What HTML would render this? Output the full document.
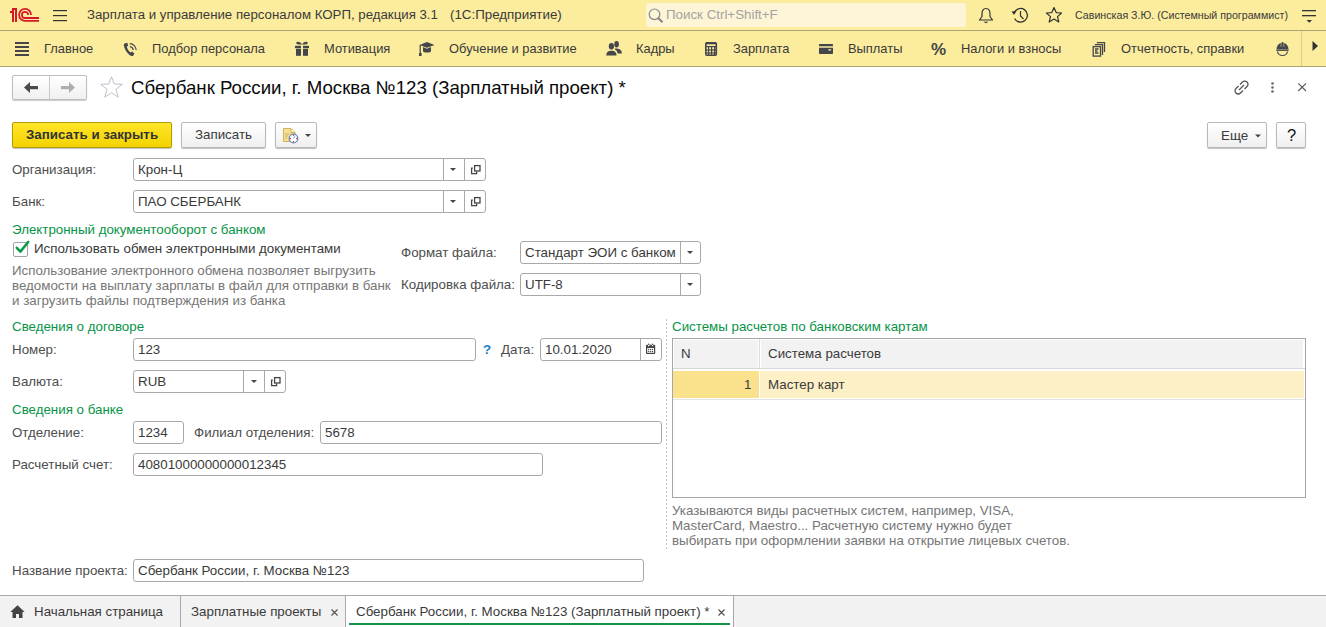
<!DOCTYPE html>
<html><head><meta charset="utf-8">
<style>
*{margin:0;padding:0;box-sizing:border-box}
html,body{width:1326px;height:627px;overflow:hidden;background:#fff}
body{position:relative;font-family:"Liberation Sans",sans-serif;font-size:13.33px;color:#3A3A3A}
.a{position:absolute}
.t{position:absolute;white-space:nowrap;line-height:15px;font-size:13.33px}
.bar{position:absolute;left:0;width:1326px;background:#FBEC9E}
.fld{position:absolute;border:1px solid #A9A9A9;border-radius:3px;background:#fff}
.btn{position:absolute;border:1px solid #B9B9B9;border-radius:2px;background:linear-gradient(#fff,#EFEFEF);box-shadow:0 1px 1px rgba(0,0,0,.25)}
.vd{position:absolute;top:0;bottom:0;width:1px;background:#A9A9A9}
.lbl{color:#4D4D4D}
.grn{color:#089447}
.gry{color:#767676}
svg{position:absolute;overflow:visible}
</style></head><body>

<!-- top bar -->
<div class="bar" style="top:0;height:30px"></div>
<div class="a" style="left:0;top:30px;width:1326px;height:1px;background:#ADA474"></div>
<div class="bar" style="top:31px;height:35px"></div>
<div class="a" style="left:0;top:66px;width:1326px;height:1px;background:#ADA474"></div>

<svg style="left:0;top:0" width="45" height="30" viewBox="0 0 45 30">
 <g fill="none" stroke="#D6192A" stroke-width="1.8">
  <path d="M31.05,14.95 A6,6 0 1 0 25.05,20.95 H39"/>
  <path d="M28.1,14.9 A3.1,3.1 0 1 0 25,18 H39"/>
 </g>
 <g fill="#D6192A"><rect x="12" y="8" width="5" height="2"/><rect x="12" y="8" width="2" height="14"/><rect x="15" y="8" width="2" height="14"/><rect x="10" y="11" width="4" height="2"/></g>
</svg>
<svg style="left:53px;top:9px" width="15" height="13"><g fill="#333"><rect x="0" y="1" width="14" height="1.2"/><rect x="0" y="6" width="14" height="1.2"/><rect x="0" y="11" width="14" height="1.2"/></g></svg>

<div class="t" style="left:87px;top:7px;font-size:13.25px">Зарплата и управление персоналом КОРП, редакция 3.1</div>
<div class="t" style="left:450px;top:7px">(1С:Предприятие)</div>

<div class="a" style="left:646px;top:3px;width:320px;height:24px;background:#FDF5D5;border-radius:3px"></div>
<svg style="left:648px;top:8px" width="17" height="16"><circle cx="6.5" cy="6.3" r="5.3" fill="none" stroke="#888" stroke-width="1.2"/><path d="M10.3,10.3 L14.5,14.3" stroke="#888" stroke-width="2.2"/></svg>
<div class="t" style="left:666px;top:7px;color:#A3A3A3">Поиск Ctrl+Shift+F</div>

<!-- bell -->
<svg style="left:978px;top:7px" width="16" height="17" viewBox="0 0 16 17"><path d="M8,1.5 C5,1.5 4,4 4,7 L4,9.5 L1.5,13 H14.5 L12,9.5 V7 C12,4 11,1.5 8,1.5 Z" fill="none" stroke="#333" stroke-width="1.2" stroke-linejoin="round"/><path d="M5.5,14.8 H10.5 L8,16.2 Z" fill="#333"/></svg>
<!-- history -->
<svg style="left:1011px;top:7px" width="18" height="17" viewBox="0 0 18 17"><path d="M3.2,6 A6.8,6.8 0 1 1 3.6,11.5" fill="none" stroke="#333" stroke-width="1.3"/><path d="M0.5,4.5 L5.5,4 L3,8 Z" fill="#333"/><path d="M9.5,4 V9 L12.5,12" fill="none" stroke="#333" stroke-width="1.2"/></svg>
<!-- star -->
<svg style="left:1045px;top:6px" width="18" height="18" viewBox="0 0 18 18"><path d="M9,1.5 L11.2,6.6 L16.6,7 L12.5,10.6 L13.8,16 L9,13.1 L4.2,16 L5.5,10.6 L1.4,7 L6.8,6.6 Z" fill="none" stroke="#333" stroke-width="1.2" stroke-linejoin="round"/></svg>
<div class="t" style="left:1075px;top:9px;font-size:10.67px;line-height:13px">Савинская З.Ю. (Системный программист)</div>
<svg style="left:1302px;top:9px" width="15" height="15"><rect x="0" y="1" width="14" height="1.3" fill="#333"/><rect x="0" y="6" width="14" height="1.3" fill="#333"/><path d="M4.6,11 H10 L7.3,13.8 Z" fill="#333"/></svg>

<!-- section bar -->
<svg style="left:15px;top:42px" width="14" height="14"><g fill="#44464C"><rect y="0" width="14" height="2"/><rect y="4" width="14" height="2"/><rect y="8" width="14" height="2"/><rect y="12" width="14" height="2"/></g></svg>
<div class="t" style="left:44px;top:41px;font-size:12.9px">Главное</div>
<svg style="left:123px;top:42px" width="14" height="15" viewBox="0 0 14 15"><path d="M2.3,1.2 L4.2,0.8 L5.2,3.6 L3.8,4.8 C4.3,7 5.8,9.3 7.6,10.6 L9,9.6 L11.3,11.6 L10.4,13.5 C9.5,14.3 8,14.2 6.8,13.2 C3.5,10.5 1.2,6.5 0.8,3.2 C0.7,2.3 1.3,1.6 2.3,1.2 Z" fill="#44464C"/><path d="M6.8,1.6 A6.8,6.8 0 0 1 13.2,8" fill="none" stroke="#44464C" stroke-width="1.2"/><path d="M6.8,4.6 A3.8,3.8 0 0 1 10.2,8" fill="none" stroke="#44464C" stroke-width="1.2"/></svg>
<div class="t" style="left:152px;top:41px;font-size:12.9px">Подбор персонала</div>
<svg style="left:295px;top:41px" width="15" height="15" viewBox="0 0 15 15"><g fill="#44464C"><path d="M7,3.6 C5.5,0.3 1.2,0 1.2,2.3 C1.2,3.4 3.5,3.7 7,3.6 Z"/><path d="M7,3.6 C8.5,0.3 12.8,0 12.8,2.3 C12.8,3.4 10.5,3.7 7,3.6 Z"/><rect x="0" y="4.8" width="6" height="2.4"/><rect x="8" y="4.8" width="6" height="2.4"/><rect x="1" y="7.8" width="5" height="7"/><rect x="8" y="7.8" width="5" height="7"/></g></svg>
<div class="t" style="left:324px;top:41px;font-size:12.9px">Мотивация</div>
<svg style="left:419px;top:42px" width="16" height="15" viewBox="0 0 16 15"><g fill="#44464C"><path d="M8,0 L15.5,3 L8,5.8 L0.5,3 Z"/><path d="M4,5 L8,6.8 L12,5 V9 C12,11 4,11 4,9 Z"/><rect x="0.6" y="3" width="1.2" height="9"/><rect x="0" y="11" width="2.6" height="3"/></g></svg>
<div class="t" style="left:449px;top:41px;font-size:12.9px">Обучение и развитие</div>
<svg style="left:606px;top:41px" width="17" height="16" viewBox="0 0 17 16"><g fill="#44464C"><ellipse cx="5.4" cy="5.3" rx="2.6" ry="3.3"/><path d="M0.3,14.5 C0.3,11 2.5,9.8 5.4,9.8 C8.3,9.8 10.5,11 10.5,14.5 Z"/><ellipse cx="10.6" cy="3.3" rx="2.3" ry="3.2"/><path d="M9,7.5 C12,7.3 15.8,8.2 15.8,11.8 L15.8,12.5 L11.6,12.5 C11.4,10.5 10.5,9.2 9,8.5 Z"/></g></svg>
<div class="t" style="left:636px;top:41px;font-size:12.9px">Кадры</div>
<svg style="left:705px;top:42px" width="13" height="14" viewBox="0 0 13 14"><rect x="0.8" y="0.8" width="10.5" height="12.5" rx="1" fill="none" stroke="#44464C" stroke-width="1.6"/><rect x="1" y="0.8" width="10" height="1.5" fill="#44464C"/><g fill="#44464C"><rect x="1" y="4" width="10.3" height="1.2"/><rect x="3" y="5" width="1.2" height="8"/><rect x="6" y="5" width="1.2" height="8"/><rect x="9" y="5" width="1.2" height="8"/><rect x="1" y="7.4" width="10.3" height="1.2"/><rect x="1" y="10.4" width="10.3" height="1.2"/></g></svg>
<div class="t" style="left:733px;top:41px;font-size:12.9px">Зарплата</div>
<svg style="left:819px;top:44px" width="14" height="10" viewBox="0 0 14 10"><path d="M1,0 H13 C13.6,0 14,0.4 14,1 V2.2 H0 V1 C0,0.4 0.4,0 1,0 Z M0,3.8 H14 V9 C14,9.6 13.6,10 13,10 H1 C0.4,10 0,9.6 0,9 Z" fill="#44464C"/><rect x="9.3" y="5.2" width="2.8" height="1.3" fill="#FBEC9E"/></svg>
<div class="t" style="left:848px;top:41px;font-size:12.9px">Выплаты</div>
<div class="t" style="left:931px;top:40px;font-size:17px;line-height:20px;font-weight:bold;color:#464646">%</div>
<div class="t" style="left:961px;top:41px;font-size:12.9px">Налоги и взносы</div>
<svg style="left:1092px;top:41px" width="14" height="16" viewBox="0 0 14 16"><g fill="none" stroke="#44464C" stroke-width="1.3"><rect x="1.2" y="5.6" width="7.3" height="9.5"/><path d="M2.8,3.6 H10.5 V14"/><path d="M4.8,1.6 H12.5 V11"/><path d="M3,8 H6.5 M3,10 H5.5 M3,12 H6.5"/></g></svg>
<div class="t" style="left:1121px;top:41px;font-size:12.9px">Отчетность, справки</div>
<svg style="left:1276px;top:42px" width="13" height="14" viewBox="0 0 13 14"><g fill="#44464C"><path d="M6,0.3 H7 V4 H6 Z"/><path d="M0.5,7.5 C0.5,4 2.5,1.5 4.8,1 V5 H5.3 V0.4 H7.7 V5 H8.2 V1 C10.5,1.5 12.5,4 12.5,7.5 Z"/></g><path d="M0.3,8.3 H12.7" stroke="#44464C" stroke-width="1.2"/><path d="M1.5,9.5 C2,12.3 4,13.5 6.5,13.5 C9,13.5 11,12.3 11.5,9.5" fill="none" stroke="#44464C" stroke-width="1.2"/></svg>
<div class="a" style="left:1301px;top:31px;width:1px;height:35px;background:#D8CC8A"></div>
<svg style="left:1312px;top:40px" width="7" height="12"><path d="M0.5,1 L6,6 L0.5,11 Z" fill="#333"/></svg>


<!-- form header -->
<div class="a" style="left:12px;top:75px;width:75px;height:25px;border:1px solid #BDBDBD;border-radius:2px;background:linear-gradient(#fff,#F0F0F0);box-shadow:0 1px 1px rgba(0,0,0,.2)"></div>
<div class="a" style="left:49px;top:76px;width:1px;height:24px;background:#C8C8C8"></div>
<svg style="left:24px;top:82px" width="15" height="12" viewBox="0 0 15 12"><path d="M0,5.5 L6,0 V4 H14 V7.2 H6 V11 Z" fill="#4A4A4A"/></svg>
<svg style="left:61px;top:82px" width="15" height="12" viewBox="0 0 15 12"><path d="M14,5.5 L8,0 V4 H0 V7.2 H8 V11 Z" fill="#AEAEAE"/></svg>
<svg style="left:100px;top:76px" width="24" height="23" viewBox="0 0 24 23"><path d="M11.5,0.8 L14.3,8 L22.3,8.3 L16,13.3 L18.2,21.2 L11.5,16.7 L4.8,21.2 L7,13.3 L0.7,8.3 L8.7,8 Z" fill="none" stroke="#B9C1CB" stroke-width="1" stroke-linejoin="miter"/></svg>
<div class="t" style="left:131px;top:77px;font-size:18.67px;line-height:22px;color:#0A0A0A">Сбербанк России, г. Москва №123 (Зарплатный проект) *</div>
<svg style="left:1233px;top:79px" width="17" height="17" viewBox="0 0 17 17"><g fill="none" stroke="#555" stroke-width="1.3"><path d="M7,5.5 L9.5,3 C10.8,1.7 12.8,1.7 14,3 C15.3,4.2 15.3,6.2 14,7.5 L11.5,10"/><path d="M10,11.5 L7.5,14 C6.2,15.3 4.2,15.3 3,14 C1.7,12.8 1.7,10.8 3,9.5 L5.5,7"/><path d="M6,11 L11,6"/></g></svg>
<svg style="left:1270px;top:82px" width="5" height="12"><g fill="#666"><circle cx="2.5" cy="1.5" r="1.3"/><circle cx="2.5" cy="5.5" r="1.3"/><circle cx="2.5" cy="9.5" r="1.3"/></g></svg>
<svg style="left:1297px;top:82px" width="11" height="11"><path d="M1.3,1.3 L9,9 M9,1.3 L1.3,9" stroke="#555" stroke-width="1.1"/></svg>

<!-- toolbar -->
<div class="a" style="left:12px;top:122px;width:160px;height:26px;border:1px solid #B39B00;border-radius:2px;background:linear-gradient(#FFE52A,#F3D300);box-shadow:0 1px 1px rgba(0,0,0,.25)"></div>
<div class="t" style="left:26px;top:127px;font-weight:bold;color:#333">Записать и закрыть</div>
<div class="btn" style="left:181px;top:122px;width:85px;height:26px"></div>
<div class="t" style="left:195px;top:127px">Записать</div>
<div class="btn" style="left:275px;top:122px;width:42px;height:26px"></div>
<svg style="left:282px;top:127px" width="16" height="17" viewBox="0 0 16 17"><path d="M1.5,1.5 H9 L13,5.5 V14.5 H1.5 Z" fill="#F3E09A" stroke="#D2B255" stroke-width="1"/><path d="M9,1.5 V5.5 H13" fill="#FFF3C8" stroke="#D2B255" stroke-width="1"/><g stroke="#D2B255" stroke-width="1"><path d="M3,7 H7 M3,9 H6 M3,11 H5"/></g><circle cx="11.5" cy="11.5" r="4.3" fill="#fff" stroke="#5F8DC2" stroke-width="1.2"/><g fill="#E02020"><circle cx="11.5" cy="8.3" r=".7"/><circle cx="11.5" cy="14.7" r=".7"/><circle cx="8.3" cy="11.5" r=".7"/><circle cx="14.7" cy="11.5" r=".7"/></g><path d="M11.5,11.5 L13,9" stroke="#7C9FD0" stroke-width="1"/></svg>
<svg style="left:305px;top:134px" width="6" height="3"><path d="M0,0 H6 L3,3 Z" fill="#444"/></svg>

<div class="btn" style="left:1207px;top:122px;width:60px;height:26px"></div>
<div class="t" style="left:1221px;top:128px">Еще</div>
<svg style="left:1255px;top:134px" width="6" height="4"><path d="M0,0.5 H6 L3,3.5 Z" fill="#444"/></svg>
<div class="btn" style="left:1276px;top:122px;width:30px;height:26px"></div>
<div class="t" style="left:1287px;top:126px;font-size:16.5px;line-height:18px;color:#111">?</div>

<!-- fields left -->
<div class="t lbl" style="left:12px;top:162px">Организация:</div>
<div class="fld" style="left:133px;top:158px;width:353px;height:23px"><div class="vd" style="left:309px"></div><div class="vd" style="left:330px"></div></div>
<div class="t" style="left:138px;top:162px">Крон-Ц</div>
<svg style="left:450px;top:168px" width="6" height="3"><path d="M0,0 H6 L3,3 Z" fill="#444"/></svg>
<svg style="left:470px;top:164px" width="11" height="11" viewBox="0 0 11 11"><g fill="none" stroke="#444" stroke-width="1.3"><rect x="4.6" y="1.6" width="5.4" height="5.4"/><path d="M2.8,4.2 H1.6 V9.6 H6.6 V7.6"/></g></svg>

<div class="t lbl" style="left:12px;top:194px">Банк:</div>
<div class="fld" style="left:133px;top:190px;width:353px;height:23px"><div class="vd" style="left:309px"></div><div class="vd" style="left:330px"></div></div>
<div class="t" style="left:138px;top:194px">ПАО СБЕРБАНК</div>
<svg style="left:450px;top:200px" width="6" height="3"><path d="M0,0 H6 L3,3 Z" fill="#444"/></svg>
<svg style="left:470px;top:196px" width="11" height="11" viewBox="0 0 11 11"><g fill="none" stroke="#444" stroke-width="1.3"><rect x="4.6" y="1.6" width="5.4" height="5.4"/><path d="M2.8,4.2 H1.6 V9.6 H6.6 V7.6"/></g></svg>

<div class="t grn" style="left:12px;top:222px">Электронный документооборот с банком</div>
<div class="a" style="left:13px;top:242px;width:15px;height:15px;border:1px solid #A3A3A3;border-radius:2px;background:#fff"></div>
<svg style="left:13px;top:239px" width="18" height="16"><path d="M3.8,8.8 L7.4,12.6 L15.2,3" fill="none" stroke="#0E9A48" stroke-width="2.6" stroke-linecap="round" stroke-linejoin="round"/></svg>
<div class="t" style="left:34px;top:241px">Использовать обмен электронными документами</div>
<div class="t gry" style="left:12px;top:263px">Использование электронного обмена позволяет выгрузить</div>
<div class="t gry" style="left:12px;top:278px">ведомости на выплату зарплаты в файл для отправки в банк</div>
<div class="t gry" style="left:12px;top:293px">и загрузить файлы подтверждения из банка</div>

<div class="t lbl" style="left:401px;top:245px">Формат файла:</div>
<div class="fld" style="left:520px;top:241px;width:181px;height:23px"><div class="vd" style="left:159px"></div></div>
<div class="t" style="left:525px;top:245px">Стандарт ЭОИ с банком</div>
<svg style="left:687px;top:251px" width="6" height="3"><path d="M0,0 H6 L3,3 Z" fill="#444"/></svg>
<div class="t lbl" style="left:401px;top:277px">Кодировка файла:</div>
<div class="fld" style="left:520px;top:273px;width:181px;height:23px"><div class="vd" style="left:159px"></div></div>
<div class="t" style="left:525px;top:277px">UTF-8</div>
<svg style="left:687px;top:283px" width="6" height="3"><path d="M0,0 H6 L3,3 Z" fill="#444"/></svg>

<div class="t grn" style="left:12px;top:319px">Сведения о договоре</div>
<div class="t lbl" style="left:12px;top:342px">Номер:</div>
<div class="fld" style="left:133px;top:338px;width:343px;height:23px"></div>
<div class="t" style="left:138px;top:342px">123</div>
<div class="t" style="left:483px;top:342px;font-weight:bold;color:#1A7FC4;font-size:13.33px">?</div>
<div class="t lbl" style="left:501px;top:342px">Дата:</div>
<div class="fld" style="left:540px;top:338px;width:122px;height:23px"><div class="vd" style="left:99px"></div></div>
<div class="t" style="left:545px;top:342px">10.01.2020</div>
<svg style="left:645px;top:343px" width="11" height="12" viewBox="0 0 11 12"><rect x="1" y="1.8" width="9.2" height="9.2" rx="1" fill="#444"/><rect x="2.2" y="5" width="6.8" height="4.8" fill="#fff"/><g fill="#444"><circle cx="3.7" cy="6.5" r=".65"/><circle cx="5.6" cy="6.5" r=".65"/><circle cx="7.5" cy="6.5" r=".65"/><circle cx="3.7" cy="8.5" r=".65"/><circle cx="5.6" cy="8.5" r=".65"/><circle cx="7.5" cy="8.5" r=".65"/></g><g fill="#fff"><rect x="3" y="1.8" width="1.4" height="1.4"/><rect x="6.8" y="1.8" width="1.4" height="1.4"/></g><g fill="#444"><circle cx="3.7" cy="1.3" r=".7"/><circle cx="7.5" cy="1.3" r=".7"/></g></svg>

<div class="t lbl" style="left:12px;top:374px">Валюта:</div>
<div class="fld" style="left:133px;top:370px;width:153px;height:23px"><div class="vd" style="left:109px"></div><div class="vd" style="left:130px"></div></div>
<div class="t" style="left:138px;top:374px">RUB</div>
<svg style="left:251px;top:380px" width="6" height="3"><path d="M0,0 H6 L3,3 Z" fill="#444"/></svg>
<svg style="left:270px;top:376px" width="11" height="11" viewBox="0 0 11 11"><g fill="none" stroke="#444" stroke-width="1.3"><rect x="4.6" y="1.6" width="5.4" height="5.4"/><path d="M2.8,4.2 H1.6 V9.6 H6.6 V7.6"/></g></svg>

<div class="t grn" style="left:12px;top:402px">Сведения о банке</div>
<div class="t lbl" style="left:12px;top:425px">Отделение:</div>
<div class="fld" style="left:133px;top:421px;width:51px;height:23px"></div>
<div class="t" style="left:138px;top:425px">1234</div>
<div class="t lbl" style="left:194px;top:425px">Филиал отделения:</div>
<div class="fld" style="left:320px;top:421px;width:342px;height:23px"></div>
<div class="t" style="left:325px;top:425px">5678</div>
<div class="t lbl" style="left:12px;top:457px">Расчетный счет:</div>
<div class="fld" style="left:133px;top:453px;width:410px;height:23px"></div>
<div class="t" style="left:138px;top:457px">40801000000000012345</div>

<div class="a" style="left:666px;top:319px;width:1px;height:231px;background:repeating-linear-gradient(#C4C4C4 0 2px,transparent 2px 4px)"></div>

<!-- right table -->
<div class="t grn" style="left:672px;top:319px">Системы расчетов по банковским картам</div>
<div class="a" style="left:672px;top:338px;width:634px;height:160px;border:1px solid #A6A6A6;background:#fff">
  <div class="a" style="left:1px;top:1px;width:84px;height:28px;background:#F2F2F2"></div>
  <div class="a" style="left:88px;top:1px;width:542px;height:28px;background:#F2F2F2"></div>
  <div class="a" style="left:86px;top:0;width:1px;height:30px;background:#DCDCDC"></div>
  <div class="a" style="left:0;top:29px;width:632px;height:1px;background:#D6D6D6"></div>
  <div class="a" style="left:0;top:32px;width:86px;height:27px;background:#FAE28C"></div>
  <div class="a" style="left:87px;top:32px;width:544px;height:27px;background:#FDF0C6"></div>
  <div class="a" style="left:0;top:60px;width:632px;height:1px;background:#E3E3E3"></div>
</div>
<div class="t" style="left:681px;top:346px">N</div>
<div class="t" style="left:768px;top:346px">Система расчетов</div>
<div class="t" style="left:744px;top:377px">1</div>
<div class="t" style="left:768px;top:377px">Мастер карт</div>
<div class="t gry" style="left:672px;top:503px">Указываются виды расчетных систем, например, VISA,</div>
<div class="t gry" style="left:672px;top:518px">MasterCard, Maestro... Расчетную систему нужно будет</div>
<div class="t gry" style="left:672px;top:533px">выбирать при оформлении заявки на открытие лицевых счетов.</div>

<div class="t lbl" style="left:12px;top:563px">Название проекта:</div>
<div class="fld" style="left:133px;top:559px;width:511px;height:23px"></div>
<div class="t" style="left:138px;top:563px">Сбербанк России, г. Москва №123</div>

<!-- tabs -->
<div class="a" style="left:0;top:595px;width:1326px;height:1px;background:#A9A9A9"></div>
<div class="a" style="left:0;top:596px;width:1326px;height:31px;background:#F2F2F2"></div>
<svg style="left:10px;top:605px" width="15" height="13" viewBox="0 0 15 13"><path d="M7.5,0.3 L14.7,7 H12.5 V13 H9 V9 H6 V13 H2.5 V7 H0.3 Z" fill="#444"/></svg>
<div class="t" style="left:34px;top:604px">Начальная страница</div>
<div class="a" style="left:180px;top:596px;width:1px;height:31px;background:#A9A9A9"></div>
<div class="t" style="left:191px;top:604px">Зарплатные проекты</div>
<svg style="left:331px;top:609px" width="7" height="7"><path d="M0.5,0.5 L6.5,6.5 M6.5,0.5 L0.5,6.5" stroke="#555" stroke-width="1.2"/></svg>
<div class="a" style="left:345px;top:596px;width:1px;height:31px;background:#A9A9A9"></div>
<div class="a" style="left:346px;top:596px;width:387px;height:31px;background:#fff"></div>
<div class="a" style="left:733px;top:596px;width:1px;height:31px;background:#A9A9A9"></div>
<div class="t" style="left:356px;top:604px">Сбербанк России, г. Москва №123 (Зарплатный проект) *</div>
<svg style="left:718px;top:609px" width="8" height="7"><path d="M0.5,0.5 L6.5,6.5 M6.5,0.5 L0.5,6.5" stroke="#555" stroke-width="1.2"/></svg>
<div class="a" style="left:349px;top:623px;width:381px;height:2px;background:#159447"></div>

</body></html>
